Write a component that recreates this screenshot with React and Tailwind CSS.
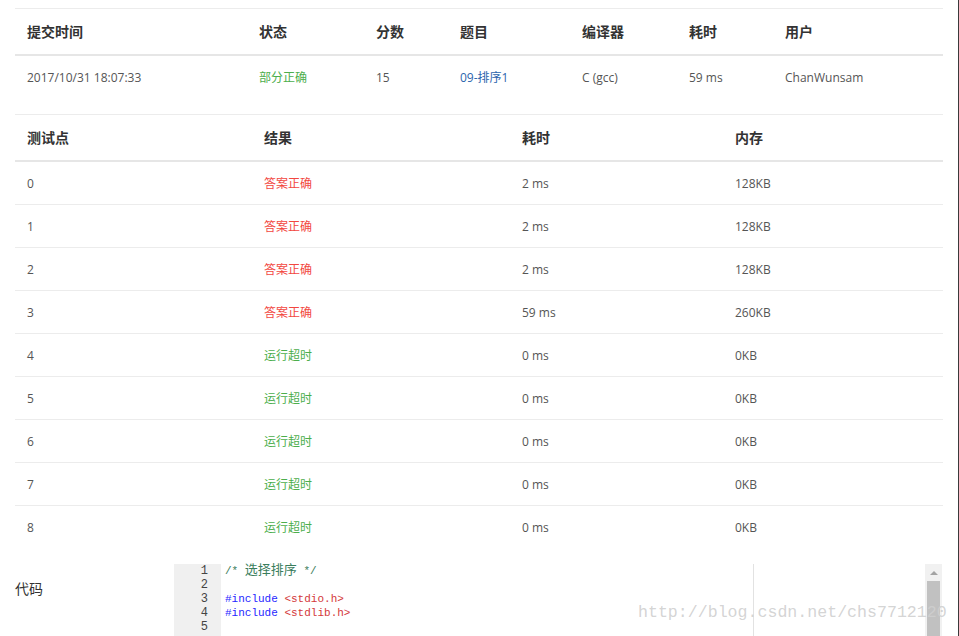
import React from 'react';

const font = 'font-["Open_Sans","Noto_Sans_CJK_SC",sans-serif]';

const submitCols = [
    { title: '提交时间', w: 'w-[232px]' },
    { title: '状态', w: 'w-[117px]' },
    { title: '分数', w: 'w-[84px]' },
    { title: '题目', w: 'w-[122px]' },
    { title: '编译器', w: 'w-[107px]' },
    { title: '耗时', w: 'w-[96px]' },
    { title: '用户', w: 'w-[170px]' },
];

const caseCols = [
    { title: '测试点', w: 'w-[237px]' },
    { title: '结果', w: 'w-[258px]' },
    { title: '耗时', w: 'w-[213px]' },
    { title: '内存', w: 'w-[220px]' },
];

const cases = [
    ['0', '答案正确', '2 ms', '128KB'],
    ['1', '答案正确', '2 ms', '128KB'],
    ['2', '答案正确', '2 ms', '128KB'],
    ['3', '答案正确', '59 ms', '260KB'],
    ['4', '运行超时', '0 ms', '0KB'],
    ['5', '运行超时', '0 ms', '0KB'],
    ['6', '运行超时', '0 ms', '0KB'],
    ['7', '运行超时', '0 ms', '0KB'],
    ['8', '运行超时', '0 ms', '0KB'],
];

const HeadRow = ({ cols }) => (
    <div className="flex border-t border-[#ececec] border-b-2 border-b-[#e6e6e6]">
        {cols.map((c) => (
            <div key={c.title} className={`${c.w} px-3 py-3 text-[14px] leading-[21px] font-bold text-[#333]`}>
                {c.title}
            </div>
        ))}
    </div>
);

const cell = 'px-3 pt-[13px] pb-[11px]';

const App = () => {
    return (
        <div className={`${font} relative w-[959px] h-[636px] overflow-hidden bg-white border-r border-[#3a3a3a]`}>
            <div className="ml-[15px] w-[928px] pt-2">
                {/* submission */}
                <HeadRow cols={submitCols} />
                <div className="flex text-[12px] leading-[18px] text-[#555]">
                    <div className={`w-[232px] ${cell}`}>2017/10/31 18:07:33</div>
                    <div className={`w-[117px] ${cell} text-[#4cae4c]`}>部分正确</div>
                    <div className={`w-[84px] ${cell}`}>15</div>
                    <div className={`w-[122px] ${cell} text-[#2c65ad]`}>09-排序1</div>
                    <div className={`w-[107px] ${cell}`}>C (gcc)</div>
                    <div className={`w-[96px] ${cell}`}>59 ms</div>
                    <div className={`w-[170px] ${cell}`}>ChanWunsam</div>
                </div>

                {/* test cases */}
                <div className="mt-4">
                    <HeadRow cols={caseCols} />
                    {cases.map((r, i) => (
                        <div key={r[0]} className={`flex text-[12px] leading-[18px] text-[#555] ${i > 0 ? 'border-t border-[#ececec]' : ''}`}>
                            <div className={`w-[237px] ${cell}`}>{r[0]}</div>
                            <div className={`w-[258px] ${cell} ${r[1] === '答案正确' ? 'text-[#f2473f]' : 'text-[#4cae4c]'}`}>{r[1]}</div>
                            <div className={`w-[213px] ${cell}`}>{r[2]}</div>
                            <div className={`w-[220px] ${cell}`}>{r[3]}</div>
                        </div>
                    ))}
                </div>

                {/* code */}
                <div className="mt-4 flex">
                    <div className="w-[159px] pt-[16px] text-[14px] leading-[18px] text-[#333]">代码</div>
                    <div className='flex flex-1 h-[80px] font-["Liberation_Mono","Noto_Sans_CJK_SC",monospace] text-[11px] leading-[14px]'>
                        <div className="w-[47px] bg-[#f0f0f0] pr-[13px] text-right text-[12px] text-[#444]">
                            <div>1</div>
                            <div>2</div>
                            <div>3</div>
                            <div>4</div>
                            <div>5</div>
                        </div>
                        <div className="relative flex-1 pl-1">
                            <div className="text-[#3a7d5c]">/* <span className="text-[13px]">选择排序</span> */</div>
                            <div>&nbsp;</div>
                            <div><span className="text-[#1f1fff]">#include</span> <span className="text-[#d4383a]">&lt;stdio.h&gt;</span></div>
                            <div><span className="text-[#1f1fff]">#include</span> <span className="text-[#d4383a]">&lt;stdlib.h&gt;</span></div>
                            <div>&nbsp;</div>
                            <div className="absolute left-[532px] top-0 bottom-0 w-px bg-[#e2e2e2]" />
                        </div>
                        <div className="w-[17px] bg-[#f1f1f1] flex flex-col items-center">
                            <div className="h-[17px] flex items-center justify-center">
                                <div className="w-0 h-0 border-l-[4px] border-r-[4px] border-b-[4px] border-l-transparent border-r-transparent border-b-[#a3a3a3]" />
                            </div>
                            <div className="w-[13px] flex-1 bg-[#c1c1c1]" />
                        </div>
                        <div className="w-px" />
                    </div>
                </div>
            </div>

            {/* watermark */}
            <div className='absolute left-[638px] top-[602px] font-["Liberation_Mono",monospace] text-[16.6px] leading-[22px] text-[#cfcfcf]/90'>
                http://blog.csdn.net/chs7712120
            </div>
        </div>
    );
};

export default App;
